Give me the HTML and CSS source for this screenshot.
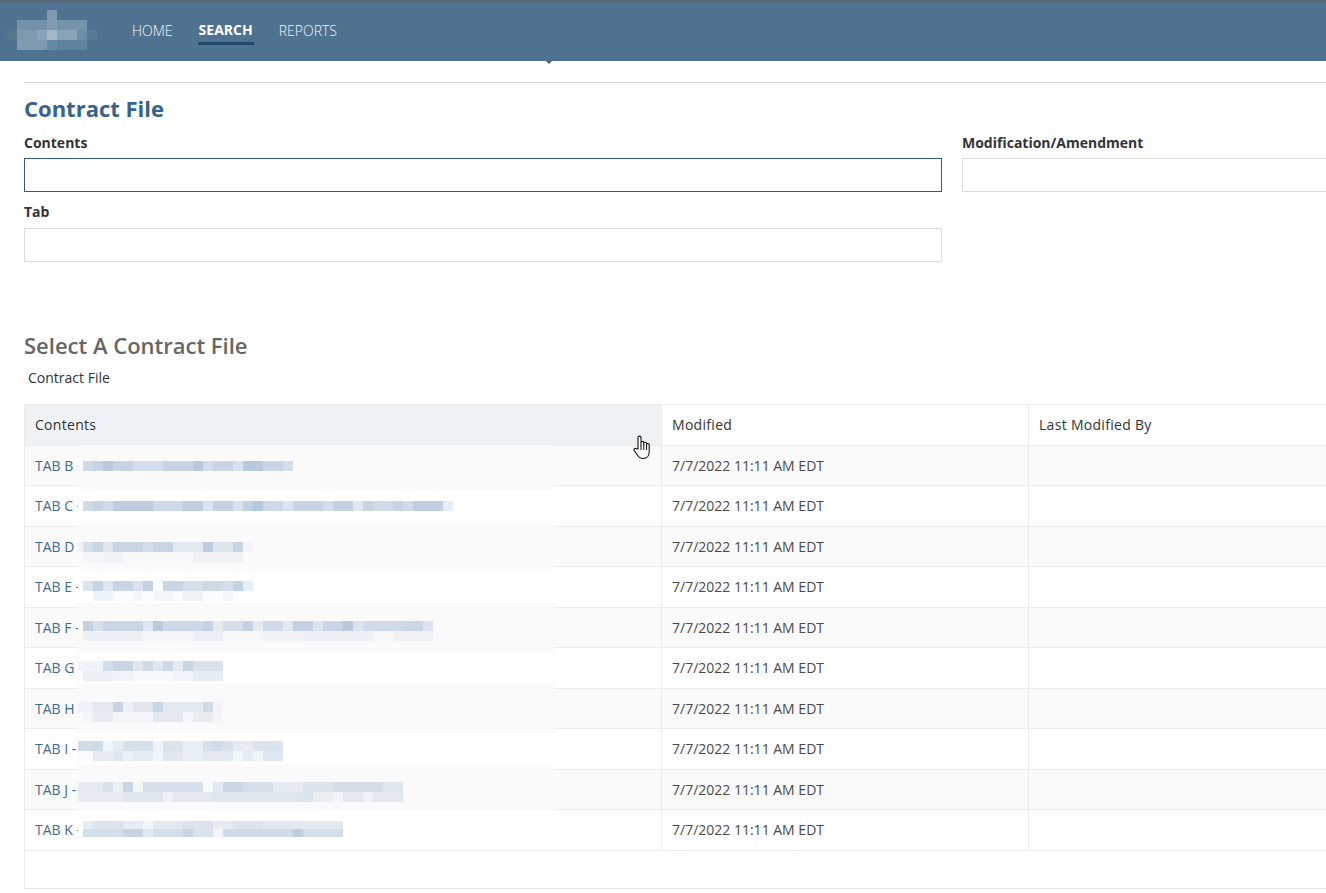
FILE: index.html
```html
<!DOCTYPE html>
<html lang="en">
<head>
    <meta charset="UTF-8">
    <meta name="viewport" content="width=device-width, initial-scale=1.0">
    <title>Contract File</title>
    <link rel="stylesheet" href="styles.css">
</head>
<body>
    <header class="topbar">
        <div class="logo"></div>
        <nav class="menu">
            <a class="menu-item" href="#">HOME</a>
            <a class="menu-item active" href="#">SEARCH</a>
            <a class="menu-item" href="#">REPORTS</a>
        </nav>
        <span class="caret"></span>
    </header>
    <main class="page">
        <hr class="rule">
        <h2 class="title">Contract File</h2>
        <div class="fields">
            <div class="field">
                <label>Contents</label>
                <input class="input focused" type="text">
            </div>
            <div class="field">
                <label>Modification/Amendment</label>
                <input class="input" type="text">
            </div>
            <div class="field field-tab">
                <label>Tab</label>
                <input class="input" type="text">
            </div>
        </div>
        <h2 class="subtitle">Select A Contract File</h2>
        <p class="caption">Contract File</p>
        <div class="table-wrap">
            <table class="files">
                <thead>
                    <tr>
                        <th class="sorted">Contents</th>
                        <th>Modified</th>
                        <th>Last Modified By</th>
                    </tr>
                </thead>
                <tbody>
                    <tr><td class="name"><a href="#">TAB B -</a><span class="smudge smudge-b"></span></td><td>7/7/2022 11:11 AM EDT</td><td></td></tr>
                    <tr><td class="name"><a href="#">TAB C -</a><span class="smudge smudge-c"></span></td><td>7/7/2022 11:11 AM EDT</td><td></td></tr>
                    <tr><td class="name"><a href="#">TAB D -</a><span class="smudge smudge-d"></span></td><td>7/7/2022 11:11 AM EDT</td><td></td></tr>
                    <tr><td class="name"><a href="#">TAB E -</a><span class="smudge smudge-e"></span></td><td>7/7/2022 11:11 AM EDT</td><td></td></tr>
                    <tr><td class="name"><a href="#">TAB F -</a><span class="smudge smudge-f"></span></td><td>7/7/2022 11:11 AM EDT</td><td></td></tr>
                    <tr><td class="name"><a href="#">TAB G -</a><span class="smudge smudge-g"></span></td><td>7/7/2022 11:11 AM EDT</td><td></td></tr>
                    <tr><td class="name"><a href="#">TAB H -</a><span class="smudge smudge-h"></span></td><td>7/7/2022 11:11 AM EDT</td><td></td></tr>
                    <tr><td class="name"><a href="#">TAB I -</a><span class="smudge smudge-i"></span></td><td>7/7/2022 11:11 AM EDT</td><td></td></tr>
                    <tr><td class="name"><a href="#">TAB J -</a><span class="smudge smudge-j"></span></td><td>7/7/2022 11:11 AM EDT</td><td></td></tr>
                    <tr><td class="name"><a href="#">TAB K -</a><span class="smudge smudge-k"></span></td><td>7/7/2022 11:11 AM EDT</td><td></td></tr>
                </tbody>
            </table>
            <div class="table-foot"></div>
            <div class="smudge-field"></div>
            <svg class="cursor" width="18" height="25" viewBox="0 0 18 25">
                <path d="M5 14V2.6a1.5 1.5 0 0 1 3 0V10V7.8a1.4 1.4 0 0 1 2.8 0V10.500V8.600a1.400 1.400 0 0 1 2.800 0V11V9.800a1.300 1.300 0 0 1 2.600 0V17c0 3.800-2.400 6.500-6 6.500c-3 0-4.500-1.300-5.800-3.500L1.200 15.600c-.8-1.500 1-2.900 2.300-1.700z" fill="#fff" stroke="#111" stroke-width="1.100" stroke-linejoin="round"/>
                <path d="M8 10v5M10.800 10.500v4.500M13.600 11v4" fill="none" stroke="#111" stroke-width="1"/>
            </svg>
        </div>
    </main>
</body>
</html>
```

FILE: styles.css
```css
* {
    box-sizing: border-box;
}
html, body {
    height: 100%;
    overflow: hidden;
}
body {
    margin: 0;
    font-family: "Open Sans", Arial, sans-serif;
    font-size: 14px;
    color: #333;
    background: #fff;
}

/* top bar */
.topbar {
    position: relative;
    display: flex;
    align-items: stretch;
    height: 61px;
    background: #4f7290;
    border-top: 2px solid #5c6672;
}
.logo {
    width: 90px;
    height: 40px;
    margin: 8px 35px 0 7px;
    background:
        linear-gradient(#7f9ab1 0 0) 40px 0 / 10px 10px no-repeat,
        linear-gradient(90deg, #7391aa 0 30px, #7f9ab1 30px 40px, #7593ab 40px 70px) 10px 10px / 70px 10px no-repeat,
        linear-gradient(90deg, #56788f 0 10px, #7d99af 10px 30px, #8aa3b8 30px 40px, #a3b7c7 40px 50px, #8aa3b8 50px 70px, #6d8da7 70px 80px, #587a96 80px 90px) 0 20px / 90px 10px no-repeat,
        linear-gradient(90deg, #7f9ab0 0 30px, #668aa2 30px 40px, #5f829d 40px 70px) 10px 30px / 70px 10px no-repeat;
}
.menu {
    display: flex;
    gap: 25px;
}
.menu-item {
    display: block;
    height: 43px;
    padding: 19px 0 0;
    color: #f4f7fa;
    font-weight: 300;
    font-size: 14px;
    line-height: 19px;
    text-decoration: none;
}
.menu-item.active {
    color: #fff;
    font-weight: 700;
    border-bottom: 3px solid #1f4a69;
    padding: 18px 1px 0;
}
.caret {
    position: absolute;
    left: 546px;
    top: 59px;
    border: 3px solid transparent;
    border-top: 3px solid #3f6296;
    border-bottom: none;
}

/* form */
.page {
    padding-left: 24px;
    width: 1880px;
}
.rule {
    height: 1px;
    margin: 21px 0 0;
    border: none;
    background: #d6d6d6;
}
.title {
    margin: 10px 0 0;
    font-size: 22px;
    line-height: 30px;
    font-weight: 700;
    color: #376190;
}
.fields {
    display: grid;
    grid-template-columns: 918px 918px;
    column-gap: 20px;
    row-gap: 10px;
    margin-top: 9px;
}
.field label {
    display: block;
    height: 26px;
    font-weight: 700;
    font-size: 14px;
    line-height: 22px;
    color: #333;
}
.field-tab label {
    margin-top: -1px;
    height: 27px;
}
.input {
    display: block;
    width: 100%;
    height: 34px;
    border: 1px solid #dcdcdc;
    background: #fff;
    outline: none;
}
.input.focused {
    border-color: #2e5f7f;
}
.subtitle {
    margin: 68px 0 0;
    font-size: 22px;
    line-height: 30px;
    font-weight: 600;
    color: #666;
}
.caption {
    margin: 8px 0 0 4px;
    font-size: 14px;
    line-height: 19px;
}

/* table */
.table-wrap {
    position: relative;
    margin-top: 17px;
    width: 1370px;
}
.files {
    width: 1370px;
    table-layout: fixed;
    border-collapse: separate;
    border-spacing: 0;
    border-left: 1px solid #ececec;
}
.files th {
    height: 41.95px;
    padding: 0 10px;
    text-align: left;
    font-weight: 400;
    color: #333;
    letter-spacing: .3px;
    border-top: 1px solid #ececec;
    border-bottom: 1px solid #ececec;
    border-right: 1px solid #ececec;
}
.files th:nth-child(1) {
    width: 637px;
    background: #eef2f5;
}
.files th:nth-child(2) {
    width: 367px;
}
.files td {
    height: 40.5px;
    padding: 0 10px 1px;
    color: #4a4a4a;
    border-bottom: 1px solid #ececec;
    border-right: 1px solid #ececec;
}
.files tbody tr:nth-child(odd) td {
    background: #fafafa;
}
.files .name {
    position: relative;
}
.files a {
    color: #3f6b8f;
    text-decoration: none;
}
.table-foot {
    height: 38px;
    border-left: 1px solid #ececec;
    border-bottom: 1px solid #ececec;
}
.smudge-field {
    position: absolute;
    left: 54px;
    top: 41px;
    width: 476px;
    height: 365px;
    background: repeating-linear-gradient(180deg, #fafafa 0 45px, #fff 45px 77px, #fafafa 77px 81px);
}
.cursor {
    position: absolute;
    left: 609px;
    top: 31px;
}

/* redacted file names */
.smudge {
    position: absolute;
    z-index: 1;
    display: block;
    background-repeat: no-repeat;
}
.smudge-b {
    left: 58px;
    top: 15px;
    width: 210px;
    height: 10px;
    background-image: linear-gradient(90deg, #d0dbe7 0 10px, #c6d4e3 10px 20px, #b9cadc 20px 30px, #c6d4e3 30px 50px, #d3deea 50px 80px, #c6d4e3 80px 110px, #b9c9dd 110px 120px, #d3deea 120px 130px, #c8d5e4 130px 150px, #d9e3ed 150px 160px, #b8c9dc 160px 180px, #c8d5e4 180px 200px, #d3deea 200px 210px);
}
.smudge-c {
    left: 58px;
    top: 15px;
    width: 370px;
    height: 10px;
    background-image: linear-gradient(90deg, #d0dbe7 0 10px, #c6d4e3 10px 20px, #d0dbe7 20px 30px, #bdcddf 30px 70px, #cddae7 70px 100px, #c0cfe0 100px 120px, #dbe5ef 120px 130px, #c3d2e2 130px 150px, #d9e3ed 150px 160px, #c3d2e2 160px 170px, #b5c7dc 170px 180px, #ccd9e6 180px 200px, #dbe5ef 200px 210px, #c6d4e3 210px 240px, #d3deea 240px 250px, #c3d2e2 250px 270px, #e0e8f1 270px 280px, #c6d4e3 280px 290px, #d0dbe7 290px 310px, #c6d4e3 310px 320px, #d0dbe7 320px 330px, #bfcee0 330px 360px, #e6edf4 360px 370px);
}
.smudge-d {
    left: 53px;
    top: 15px;
    width: 175px;
    height: 20px;
    background-image:
        linear-gradient(90deg, #eef1f5 0 5px, #d6e0ea 5px 15px, #c9d6e4 15px 25px, #dfe6ef 25px 35px, #c8d5e3 35px 65px, #d3dde8 65px 75px, #c8d5e3 75px 95px, #e3e9f0 95px 125px, #bccde0 125px 135px, #dce4ee 135px 155px, #c5d3e3 155px 165px, #f3f4f7 165px 175px),
        linear-gradient(90deg, transparent 0 5px, #f3f5f8 5px 25px, #eff2f6 25px 45px, #f7f8fa 45px 115px, #eff1f5 115px 165px, transparent 165px);
    background-size: 100% 10px;
    background-position: 0 0, 0 10px;
}
.smudge-e {
    left: 58px;
    top: 14px;
    width: 170px;
    height: 20px;
    background-image:
        linear-gradient(90deg, #dbe4ee 0 10px, #c5d3e3 10px 20px, #dfe7f0 20px 30px, #c8d5e4 30px 50px, #dae3ed 50px 60px, #c3d1e2 60px 70px, #fff 70px 80px, #c8d5e4 80px 100px, #d6e0ea 100px 120px, #ced9e6 120px 140px, #d6e0ea 140px 150px, #c3d2e2 150px 160px, #e8eef5 160px 170px),
        linear-gradient(90deg, transparent 0 10px, #eef3f7 10px 30px, #fbfcfd 30px 50px, #f3f6f9 50px 60px, #fbfcfd 60px 70px, #f3f6f9 70px 90px, #fbfcfd 90px 100px, #eef2f6 100px 120px, #fbfcfd 120px 140px, #f3f6f9 140px 150px, transparent 150px);
    background-size: 100% 10px;
    background-position: 0 0, 0 10px;
}
.smudge-f {
    left: 58px;
    top: 13px;
    width: 350px;
    height: 20px;
    background-image:
        linear-gradient(90deg, #c3d1e2 0 10px, #d6e0ea 10px 20px, #c8d5e4 20px 60px, #dfe6ef 60px 70px, #b9cadb 70px 80px, #ccd9e6 80px 120px, #c3d1e2 120px 130px, #e6ebf2 130px 140px, #d3deea 140px 160px, #c3d1e2 160px 170px, #e6ebf2 170px 180px, #cfdbe8 180px 200px, #e0e8f0 200px 210px, #c3d1e2 210px 230px, #dbe4ee 230px 240px, #c8d5e4 240px 260px, #b9cbdb 260px 270px, #dbe4ee 270px 280px, #cfdbe8 280px 320px, #cad7e5 320px 340px, #dbe4ee 340px 350px),
        linear-gradient(90deg, #edf0f4 0 60px, #f3f5f8 60px 110px, #eceff3 110px 140px, #f6f7f9 140px 180px, #f0f2f6 180px 220px, #eceff3 220px 290px, #f6f7f9 290px 310px, #eff1f5 310px 350px);
    background-size: 100% 10px;
    background-position: 0 0, 0 10px;
}
.smudge-g {
    left: 53px;
    top: 13px;
    width: 145px;
    height: 20px;
    background-image:
        linear-gradient(90deg, #f0f3f7 0 25px, #d3deea 25px 35px, #c8d5e4 35px 55px, #dfe6ef 55px 65px, #cfdae7 65px 75px, #e0e7f0 75px 85px, #cbd8e5 85px 95px, #e6ebf2 95px 105px, #c8d5e4 105px 115px, #d9e2ec 115px 145px),
        linear-gradient(90deg, transparent 0 5px, #edf1f6 5px 35px, #f0f3f7 35px 55px, #f7f8fb 55px 95px, #f0f3f7 95px 115px, #e8edf3 115px 145px);
    background-size: 100% 10px;
    background-position: 0 0, 0 10px;
}
.smudge-h {
    left: 53px;
    top: 13px;
    width: 145px;
    height: 20px;
    background-image:
        linear-gradient(90deg, #eef1f5 0 15px, #e3e9f0 15px 35px, #c6d4e3 35px 45px, #eef1f5 45px 55px, #e0e7ef 55px 75px, #c9d6e4 75px 85px, #e3e9f0 85px 125px, #cfdae6 125px 135px, #f2f4f7 135px 145px),
        linear-gradient(90deg, transparent 0 5px, #f3f5f8 5px 15px, #e9edf2 15px 35px, #f3f5f8 35px 75px, #e3e8ef 75px 105px, #f5f6f9 105px 115px, #e9edf2 115px 135px, #f3f5f8 135px 145px);
    background-size: 100% 10px;
    background-position: 0 0, 0 10px;
}
.smudge-i {
    left: 53px;
    top: 12px;
    width: 205px;
    height: 20px;
    background-image:
        linear-gradient(90deg, #cfdce8 0 25px, #f2f6fa 25px 35px, #e6ecf3 35px 45px, #d6e0ea 45px 75px, #eff3f7 75px 85px, #dbe3ec 85px 105px, #eaeff5 105px 125px, #d6e0ea 125px 135px, #cfdbe7 135px 145px, #d9e2ec 145px 155px, #e6ecf3 155px 175px, #dbe3ec 175px 205px),
        linear-gradient(90deg, #fafbfd 0 15px, #e6ecf4 15px 35px, #dfe7f0 35px 45px, #eef2f7 45px 55px, #e6ecf4 55px 75px, #f2f5f9 75px 85px, #e0e7f0 85px 105px, #eaeff5 105px 125px, #e3e9f1 125px 155px, #f4f7fa 155px 165px, #e6ecf4 165px 175px, #f2f5f9 175px 185px, #e0e7f0 185px 205px);
    background-size: 100% 10px;
    background-position: 0 0, 0 10px;
}
.smudge-j {
    left: 53px;
    top: 12px;
    width: 325px;
    height: 20px;
    background-image:
        linear-gradient(90deg, #e6ebf1 0 25px, #d9e2ea 25px 35px, #ecf0f4 35px 45px, #c8d6e4 45px 55px, #f4f6f8 55px 65px, #d5deea 65px 125px, #f8f9fb 125px 135px, #e3e9f0 135px 145px, #cbd8e5 145px 165px, #d5dfe9 165px 195px, #e6ebf1 195px 225px, #dbe3ec 225px 255px, #d3dde8 255px 305px, #dfe6ee 305px 325px),
        linear-gradient(90deg, #e8ecf2 0 45px, #e0e6ee 45px 85px, #eef1f5 85px 95px, #e3e8ef 95px 135px, #e0e6ee 135px 225px, #dbe3ec 225px 235px, #ebeff4 235px 255px, #f3f5f8 255px 265px, #e3e8ef 265px 285px, #eef1f5 285px 295px, #e3e8ef 295px 325px);
    background-size: 100% 10px;
    background-position: 0 0, 0 10px;
}
.smudge-k {
    left: 53px;
    top: 11px;
    width: 265px;
    height: 16px;
    border-left: 5px solid #fff;
    background-image:
        linear-gradient(90deg, #e6ecf4 0 10px, #dbe4ee 10px 40px, #e6ecf4 40px 60px, #f2f5f9 60px 70px, #e3e9f1 70px 100px, #dbe4ee 100px 130px, #e6ecf4 130px 150px, #dbe4ee 150px 180px, #e3e9f1 180px 260px),
        linear-gradient(90deg, #d3deea 0 40px, #c6d4e3 40px 60px, #e3e9f1 60px 70px, #d3deea 70px 100px, #c6d4e3 100px 110px, #dbe4ee 110px 130px, #f2f5f9 130px 140px, #cfdbe8 140px 210px, #bfcee0 210px 220px, #d3deea 220px 260px);
    background-size: 100% 8px;
    background-position: 0 0, 0 8px;
}
```
